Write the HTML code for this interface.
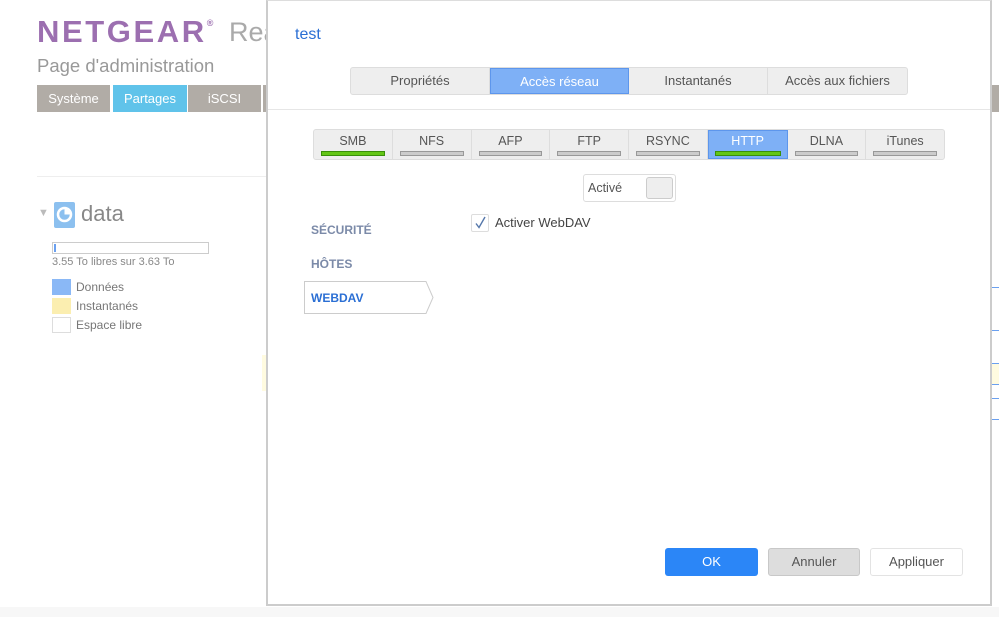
<!DOCTYPE html><html><head><meta charset="utf-8"><style>
*{box-sizing:border-box;margin:0;padding:0}
body{width:999px;height:617px;overflow:hidden;background:#fff;font-family:"Liberation Sans",sans-serif;position:relative}
.a{position:absolute}
.t{position:absolute;white-space:nowrap}
</style></head><body>
<div class="a" style="left:0;top:607px;width:999px;height:10px;background:#f7f7f7"></div>
<div class="t" style="left:37px;top:14px;font-size:31px;font-weight:bold;color:#9c6fb0;letter-spacing:2.6px">NETGEAR<sup style="font-size:9px;vertical-align:top;position:relative;top:4px">®</sup></div>
<div class="t" style="left:229px;top:17px;font-size:27px;color:#aaa">Rea</div>
<div class="t" style="left:37px;top:55px;font-size:18.5px;color:#999">Page d'administration</div>
<div class="a" style="left:37px;top:85px;width:73px;height:27px;background:#b1aca6;color:#fff;font-size:13px;text-align:center;line-height:27px">Système</div>
<div class="a" style="left:113px;top:85px;width:74px;height:27px;background:#60c3ea;color:#fff;font-size:13px;text-align:center;line-height:27px">Partages</div>
<div class="a" style="left:188px;top:85px;width:73px;height:27px;background:#b1aca6;color:#fff;font-size:13px;text-align:center;line-height:27px">iSCSI</div>
<div class="a" style="left:263px;top:85px;width:3px;height:27px;background:#b1aca6"></div>
<div class="a" style="left:991px;top:85px;width:8px;height:27px;background:#b1aca6"></div>
<div class="a" style="left:37px;top:176px;width:229px;height:1px;background:#eee"></div>
<div class="t" style="left:38px;top:207px;font-size:11px;color:#bbb">▼</div>
<div class="a" style="left:54px;top:202px;width:21px;height:26px;background:#8cc0ef;border-radius:2px"><svg class="a" style="left:2px;top:4px" width="17" height="17"><circle cx="8.5" cy="8.5" r="6.5" fill="none" stroke="#fff" stroke-width="2.5"/><path d="M8.5 8.5V2A6.5 6.5 0 0 1 15 8.5Z" fill="#fff"/></svg></div>
<div class="t" style="left:81px;top:201px;font-size:22px;color:#888">data</div>
<div class="a" style="left:52px;top:242px;width:157px;height:12px;border:1px solid #ccc"><div class="a" style="left:1px;top:1px;width:2px;height:8px;background:#6aa0f0"></div></div>
<div class="t" style="left:52px;top:256px;font-size:11px;color:#888">3.55 To libres sur 3.63 To</div>
<div class="a" style="left:52px;top:279px;width:19px;height:16px;background:#8ab8f6"></div>
<div class="a" style="left:52px;top:298px;width:19px;height:16px;background:#fbeeb0"></div>
<div class="a" style="left:52px;top:317px;width:19px;height:16px;border:1px solid #ddd"></div>
<div class="t" style="left:76px;top:280px;font-size:12px;color:#777">Données</div>
<div class="t" style="left:76px;top:299px;font-size:12px;color:#777">Instantanés</div>
<div class="t" style="left:76px;top:318px;font-size:12px;color:#777">Espace libre</div>
<div class="a" style="left:262px;top:355px;width:4px;height:36px;background:#fffbe0"></div>
<div class="a" style="left:991px;top:287px;width:8px;height:1px;background:#6aa0f0"></div>
<div class="a" style="left:991px;top:330px;width:8px;height:1px;background:#6aa0f0"></div>
<div class="a" style="left:991px;top:363px;width:8px;height:22px;background:#fffbe0;border-top:1px solid #6aa0f0;border-bottom:1px solid #6aa0f0"></div>
<div class="a" style="left:991px;top:398px;width:8px;height:22px;border-top:1px solid #6aa0f0;border-bottom:1px solid #6aa0f0"></div>

<div class="a" style="left:266px;top:0;width:726px;height:606px;background:#fff;border:2px solid #ccc;border-top:1px solid #ddd"></div>
<div class="t" style="left:295px;top:26px;font-size:16px;color:#2b6fd4">test</div>
<div class="a" style="left:350px;top:67px;width:558px;height:28px;border:1px solid #ddd;border-radius:3px;background:#eee;display:flex;font-size:13px;color:#555">
<div style="width:139px;text-align:center;line-height:26px;border-right:1px solid #ddd">Propriétés</div>
<div style="width:139px;text-align:center;line-height:26px;background:#7eb0f6;color:#fff;border:1px solid #5d96ec">Accès réseau</div>
<div style="width:139px;text-align:center;line-height:26px;border-right:1px solid #ddd">Instantanés</div>
<div style="flex:1;text-align:center;line-height:26px">Accès aux fichiers</div></div>
<div class="a" style="left:268px;top:109px;width:722px;height:1px;background:#e6e6e6"></div>
<div class="a" style="left:313px;top:129px;width:632px;height:31px;border:1px solid #ddd;border-radius:3px;background:#eee;display:flex;font-size:12.5px;color:#555">
<div style="flex:1;text-align:center;border-right:1px solid #ddd;padding-top:4px;position:relative">SMB<div class="a" style="left:7px;top:21px;right:7px;height:5px;background:#63c615;border:1px solid #3a8f0a"></div></div>
<div style="flex:1;text-align:center;border-right:1px solid #ddd;padding-top:4px;position:relative">NFS<div class="a" style="left:7px;top:21px;right:7px;height:5px;background:#ccc;border:1px solid #999"></div></div>
<div style="flex:1;text-align:center;border-right:1px solid #ddd;padding-top:4px;position:relative">AFP<div class="a" style="left:7px;top:21px;right:7px;height:5px;background:#ccc;border:1px solid #999"></div></div>
<div style="flex:1;text-align:center;border-right:1px solid #ddd;padding-top:4px;position:relative">FTP<div class="a" style="left:7px;top:21px;right:7px;height:5px;background:#ccc;border:1px solid #999"></div></div>
<div style="flex:1;text-align:center;border-right:1px solid #ddd;padding-top:4px;position:relative">RSYNC<div class="a" style="left:7px;top:21px;right:7px;height:5px;background:#ccc;border:1px solid #999"></div></div>
<div style="flex:1;text-align:center;background:#7eb0f6;color:#fff;border:1px solid #5d96ec;padding-top:3px;position:relative">HTTP<div class="a" style="left:6px;top:20px;right:6px;height:5px;background:#63c615;border:1px solid #3a8f0a"></div></div>
<div style="flex:1;text-align:center;border-right:1px solid #ddd;padding-top:4px;position:relative">DLNA<div class="a" style="left:7px;top:21px;right:7px;height:5px;background:#ccc;border:1px solid #999"></div></div>
<div style="flex:1;text-align:center;padding-top:4px;position:relative">iTunes<div class="a" style="left:7px;top:21px;right:7px;height:5px;background:#ccc;border:1px solid #999"></div></div></div>
<div class="a" style="left:583px;top:174px;width:93px;height:28px;border:1px solid #ddd;border-radius:3px"><div class="t" style="left:4px;top:6px;font-size:12.5px;color:#555">Activé</div><div class="a" style="left:62px;top:2px;width:27px;height:22px;background:#eee;border:1px solid #ccc;border-radius:3px"></div></div>
<div class="t" style="left:311px;top:223px;font-size:12px;font-weight:bold;color:#7b8aa8">SÉCURITÉ</div>
<div class="t" style="left:311px;top:257px;font-size:12px;font-weight:bold;color:#7b8aa8">HÔTES</div>
<svg class="a" style="left:303px;top:280px" width="132" height="35"><path d="M1.5 1.5H123L130 17.5L123 33.5H1.5Z" fill="#fff" stroke="#ccc"/></svg>
<div class="t" style="left:311px;top:291px;font-size:12px;font-weight:bold;color:#2b6fd4">WEBDAV</div>
<div class="a" style="left:471px;top:214px;width:18px;height:18px;border:1px solid #ddd;border-radius:2px"><svg width="16" height="16"><path d="M4 8.5L7 12.5L13 2" fill="none" stroke="#5577aa" stroke-width="1.4"/></svg></div>
<div class="t" style="left:495px;top:215px;font-size:13px;color:#444">Activer WebDAV</div>
<div class="a" style="left:665px;top:548px;width:93px;height:28px;background:#2b86f7;border-radius:3px;color:#fff;font-size:13px;text-align:center;line-height:28px">OK</div>
<div class="a" style="left:768px;top:548px;width:92px;height:28px;background:#ddd;border:1px solid #c8c8c8;border-radius:3px;color:#555;font-size:13px;text-align:center;line-height:26px">Annuler</div>
<div class="a" style="left:870px;top:548px;width:93px;height:28px;background:#fff;border:1px solid #e3e3e3;border-radius:3px;color:#555;font-size:13px;text-align:center;line-height:26px">Appliquer</div>
</body></html>
